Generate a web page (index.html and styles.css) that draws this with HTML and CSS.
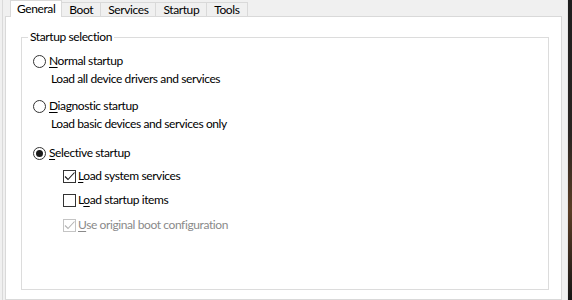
FILE: index.html
```html
<!DOCTYPE html>
<html>
<head>
    <title>System Configuration</title>
    <link rel="stylesheet" href="styles.css">
</head>
<body>
    <div class="screen">
        <div class="dialog">
            <div class="tabs">
                <div class="tab active">General</div>
                <div class="tab">Boot</div>
                <div class="tab">Services</div>
                <div class="tab">Startup</div>
                <div class="tab">Tools</div>
            </div>

            <div class="panel">
                <fieldset class="group">
                    <legend>Startup selection</legend>

                    <div class="option first">
                        <span class="radio"></span>
                        <span><u>N</u>ormal startup</span>
                    </div>
                    <div class="desc">Load all device drivers and services</div>

                    <div class="option gap-diag">
                        <span class="radio"></span>
                        <span><u>D</u>iagnostic startup</span>
                    </div>
                    <div class="desc">Load basic devices and services only</div>

                    <div class="option gap-sel">
                        <span class="radio selected"></span>
                        <span><u>S</u>elective startup</span>
                    </div>

                    <div class="option sub check-1">
                        <span class="check">
                            <svg width="13" height="13" viewBox="0 0 13 13"><path d="M2 6.5 L5 9.5 L11.5 2.5" fill="none" stroke="#1a1a1a" stroke-width="1.1"/></svg>
                        </span>
                        <span><u>L</u>oad system services</span>
                    </div>
                    <div class="option sub check-2">
                        <span class="check"></span>
                        <span>L<u>o</u>ad startup items</span>
                    </div>
                    <div class="option sub check-3 disabled">
                        <span class="check">
                            <svg width="13" height="13" viewBox="0 0 13 13"><path d="M2 6.5 L5 9.5 L11.5 2.5" fill="none" stroke="#b4b4b4" stroke-width="1.1"/></svg>
                        </span>
                        <span><u>U</u>se original boot configuration</span>
                    </div>
                </fieldset>
            </div>
        </div>
        <div class="desktop"></div>
    </div>
</body>
</html>
```

FILE: styles.css
```css
* {
    margin: 0;
    padding: 0;
    box-sizing: border-box;
}

body {
    background: #f0f0f0;
    font-family: 'Lato', 'Liberation Sans', sans-serif;
    font-size: 12px;
    letter-spacing: -0.4px;
    color: #000;
    height: 300px;
    overflow: hidden;
}

.screen {
    display: flex;
    height: 300px;
}

.dialog {
    width: 565px;
    margin-left: 2px;
    padding-left: 2px;
    padding-right: 5px;
    border-left: 1px solid #dadada;
    background: #f0f0f0;
    display: flex;
    flex-direction: column;
}

.desktop {
    flex: 1;
    border-left: 1px solid #e4e4e4;
    background: linear-gradient(180deg, #1e1e1e 0%, #2a2522 45%, #5a3d25 70%, #3a2a1e 85%, #151515 100%);
}

/* tab strip */
.tabs {
    display: flex;
    height: 16px;
    padding-left: 5px;
    align-items: flex-end;
}

.tab {
    height: 14px;
    line-height: 13px;
    padding: 0 7px;
    background: #f0f0f0;
    border: 1px solid #d9d9d9;
    border-left: none;
    border-bottom: none;
}

.tab.active {
    height: 17px;
    line-height: 16px;
    padding: 0 6px;
    background: #fff;
    border-left: 1px solid #d9d9d9;
    margin-bottom: -1px;
    position: relative;
    z-index: 1;
}

/* tab page */
.panel {
    flex: 1;
    background: #fff;
    border: 1px solid #d9d9d9;
    padding: 12px 12px 0 15px;
}

.group {
    border: 1px solid #dcdcdc;
    height: 261px;
    padding: 8px 11px 0 11px;
    line-height: 16px;
}

.group legend {
    margin-left: -5px;
    padding: 0 2px;
    line-height: 16px;
}

.option {
    display: flex;
    align-items: center;
    height: 16px;
    gap: 3px;
}

.option u {
    text-underline-offset: 2px;
}

.desc {
    margin-top: 2px;
    margin-left: 18px;
}

.gap-diag { margin-top: 11px; }
.gap-sel { margin-top: 13px; }

.sub {
    margin-left: 30px;
    gap: 2px;
}

.check-1 { margin-top: 7px; }
.check-2 { margin-top: 8px; }
.check-3 { margin-top: 9px; }

.radio {
    width: 13px;
    height: 13px;
    border: 1px solid #333;
    border-radius: 50%;
    background: #fff;
    display: flex;
    align-items: center;
    justify-content: center;
    flex-shrink: 0;
}

.radio.selected::after {
    content: '';
    width: 7px;
    height: 7px;
    border-radius: 50%;
    background: #1a1a1a;
}

.check {
    width: 13px;
    height: 13px;
    border: 1px solid #333;
    background: #fff;
    display: flex;
    align-items: center;
    justify-content: center;
    flex-shrink: 0;
    overflow: visible;
}

.check svg {
    display: block;
    flex-shrink: 0;
}

.disabled {
    color: #8a8a8a;
}

.disabled .check {
    border-color: #c4c4c4;
}
```
